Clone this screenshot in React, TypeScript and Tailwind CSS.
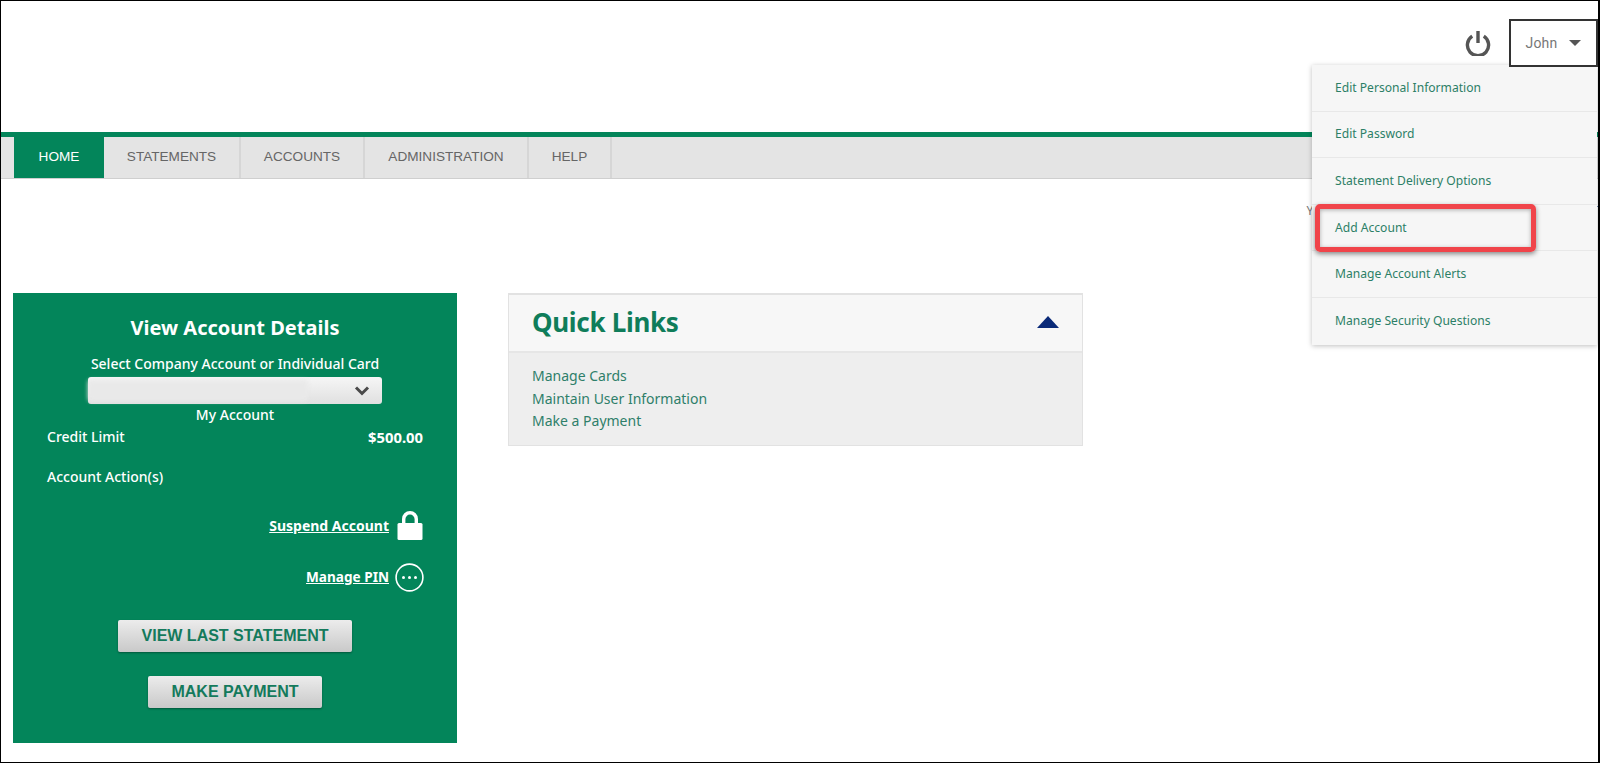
const sans = "font-['Noto_Sans','Open_Sans',sans-serif]";

const navTabs = [
  { label: "STATEMENTS", width: "w-[137px]" },
  { label: "ACCOUNTS", width: "w-[124px]" },
  { label: "ADMINISTRATION", width: "w-[164px]" },
  { label: "HELP", width: "w-[83px]" },
];

const menuItems = [
  "Edit Personal Information",
  "Edit Password",
  "Statement Delivery Options",
  "Add Account",
  "Manage Account Alerts",
  "Manage Security Questions",
];

const quickLinks = ["Manage Cards", "Maintain User Information", "Make a Payment"];

function PowerIcon() {
  return (
    <svg width="26" height="26" viewBox="0 0 26 26" fill="none" stroke="#555" strokeWidth="3.4">
      <path d="M7.2 6.2a10.6 10.6 0 1 0 11.6 0" />
      <path d="M13 1v12" />
    </svg>
  );
}

function LockIcon() {
  return (
    <svg width="26" height="29" viewBox="0 0 26 29" fill="white">
      <path d="M5 12V8a8 8 0 0 1 16 0v4h-3.4V8.2a4.6 4.6 0 0 0-9.2 0V12z" />
      <rect x="0.5" y="12" width="25" height="17" rx="1.5" />
    </svg>
  );
}

function DotsIcon() {
  return (
    <svg width="29" height="29" viewBox="0 0 29 29" fill="none">
      <circle cx="14.5" cy="14.5" r="13.4" stroke="white" strokeWidth="1.6" />
      <circle cx="8.5" cy="14.5" r="1.5" fill="white" />
      <circle cx="14.5" cy="14.5" r="1.5" fill="white" />
      <circle cx="20.5" cy="14.5" r="1.5" fill="white" />
    </svg>
  );
}

function UserMenu() {
  return (
    <div className={`absolute left-[1311px] top-[64px] z-10 w-[285px] bg-[#f6f6f6] shadow-[0_1px_5px_rgba(0,0,0,0.25)] ${sans}`}>
      {menuItems.map((item) => (
        <div
          key={item}
          className="relative flex h-[46.6px] items-center border-b border-[#e8e8e8] pl-[23px] text-[12.1px] text-[#2c7f66] last:border-b-0"
        >
          {item}
          {item === "Add Account" && (
            <span className="absolute left-[3px] top-[-1px] h-[48px] w-[221px] rounded-[5px] border-[5px] border-[#f0444a] shadow-[0_2px_5px_rgba(0,0,0,0.45),inset_0_1px_4px_rgba(0,0,0,0.3)]" />
          )}
        </div>
      ))}
    </div>
  );
}

function AccountPanel() {
  return (
    <section className={`flex h-[450px] w-[444px] flex-col bg-[#03855a] text-white ${sans}`}>
      <h2 className="mt-[21px] text-center text-[20px] font-bold leading-[28px]">View Account Details</h2>
      <p className="mt-[12px] text-center text-[14px] font-medium leading-[20px]">Select Company Account or Individual Card</p>
      <div className="mx-auto mt-[3px] flex h-[27px] w-[294px] items-center justify-between rounded-[3px] bg-gradient-to-b from-[#f6f6f6] to-[#e0e0e0] pr-[12px]">
        <span className="h-[21px] w-[220px] rounded-[3px] bg-[#e9e9e9] blur-[2px]" />
        <svg width="16" height="10" viewBox="0 0 16 10" fill="none" stroke="#4a4a4a" strokeWidth="3">
          <path d="M2 1.5l6 6 6-6" />
        </svg>
      </div>
      <p className="mt-[1px] text-center text-[14px] font-medium leading-[20px]">My Account</p>
      <div className="mt-[2px] flex justify-between px-[34px] text-[14px] font-medium leading-[20px]">
        <span>Credit Limit</span>
        <span className="text-[14.8px] font-bold">$500.00</span>
      </div>
      <p className="mt-[20px] px-[34px] text-[14px] font-medium leading-[20px]">Account Action(s)</p>
      <div className="mt-[24px] flex items-center justify-end gap-[8px] pr-[34px]">
        <a className="text-[14px] font-bold underline">Suspend Account</a>
        <LockIcon />
      </div>
      <div className="mt-[23px] flex items-center justify-end gap-[6px] pr-[33px]">
        <a className="text-[13.6px] font-bold underline">Manage PIN</a>
        <DotsIcon />
      </div>
      <button className="mx-auto mt-[28px] h-[32px] w-[234px] rounded-[2px] bg-gradient-to-b from-[#ececec] to-[#c9c9c9] font-['Liberation_Sans',sans-serif] text-[16px] font-bold text-[#147a5c] shadow-[0_1px_2px_rgba(0,0,0,0.35)]">
        VIEW LAST STATEMENT
      </button>
      <button className="mx-auto mt-[24px] h-[32px] w-[174px] rounded-[2px] bg-gradient-to-b from-[#ececec] to-[#c9c9c9] font-['Liberation_Sans',sans-serif] text-[16px] font-bold text-[#147a5c] shadow-[0_1px_2px_rgba(0,0,0,0.35)]">
        MAKE PAYMENT
      </button>
    </section>
  );
}

function QuickLinks() {
  return (
    <section className={`h-[153px] w-[575px] border border-t-2 border-[#e2e2e2] bg-[#eeeeee] ${sans}`}>
      <div className="flex h-[58px] items-center justify-between border-b-2 border-[#e6e6e6] bg-[#f7f7f7] pb-[2px] pl-[23px] pr-[23px]">
        <h2 className="text-[26px] font-bold tracking-[-0.3px] text-[#0f7d5a]">Quick Links</h2>
        <svg width="22" height="12" viewBox="0 0 22 12" fill="#0a2a78">
          <path d="M11 0l11 12H0z" />
        </svg>
      </div>
      <ul className="pl-[23px] pt-[12px] text-[14px] leading-[22.5px] text-[#2f7f6a]">
        {quickLinks.map((link) => (
          <li key={link}>{link}</li>
        ))}
      </ul>
    </section>
  );
}

export default function App() {
  return (
    <div className="relative h-[763px] w-[1600px] overflow-hidden border border-r-2 border-black bg-white">
      <header className="relative z-20 flex h-[131px] items-start justify-end gap-[18px] pt-[18px]">
        <div className="mt-[11px]">
          <PowerIcon />
        </div>
        <div className="flex h-[48px] w-[89px] items-center justify-center gap-[12px] border-2 border-[#333] bg-white font-['Roboto',sans-serif] text-[14px] tracking-[0.2px] text-[#777]">
          John
          <span className="h-0 w-0 border-x-[6px] border-t-[6px] border-x-transparent border-t-[#555]" />
        </div>
      </header>

      <UserMenu />

      <nav className="flex h-[47px] border-b border-t-[5px] border-b-[#cfcfcf] border-t-[#03855a] bg-[#e4e4e4] pl-[13px] font-['Liberation_Sans',sans-serif] text-[13.6px]">
        <a className="flex w-[90px] items-center justify-center bg-[#03855a] text-white">HOME</a>
        {navTabs.map((tab) => (
          <a key={tab.label} className={`flex ${tab.width} items-center justify-center border-r-2 border-[#d6d6d6] text-[#666]`}>
            {tab.label}
          </a>
        ))}
      </nav>

      <div className="flex h-[41px] items-end justify-end gap-[278px] font-['Noto_Sans',sans-serif] text-[12px] text-[#777]">
        <span>Y</span>
        <span>T</span>
      </div>

      <main className="mt-[73px] flex items-start gap-[51px] pl-[12px]">
        <AccountPanel />
        <QuickLinks />
      </main>
    </div>
  );
}
